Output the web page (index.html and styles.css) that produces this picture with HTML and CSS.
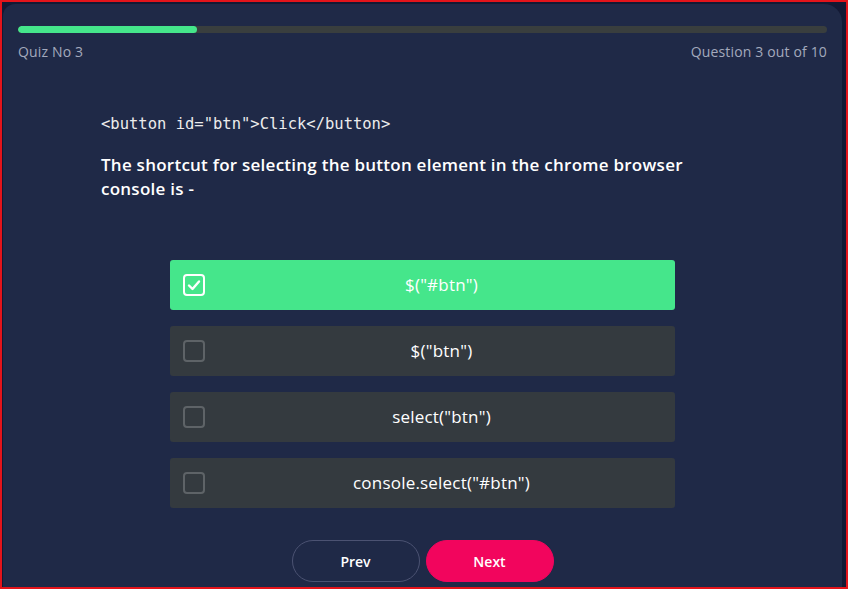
FILE: index.html
```html
<!DOCTYPE html>
<html>
<head>
<meta charset="utf-8">
<link rel="stylesheet" href="styles.css">
</head>
<body>
<div class="frame">
  <div class="card">
    <div class="progress"><div class="progress-fill"></div></div>
    <div class="meta">
      <span>Quiz No 3</span>
      <span>Question 3 out of 10</span>
    </div>
    <div class="question">
      <div class="code">&lt;button id="btn"&gt;Click&lt;/button&gt;</div>
      <p class="prompt">The shortcut for selecting the button element in the chrome browser console is -</p>
    </div>
    <div class="options">
      <div class="option selected">
        <span class="check"><svg viewBox="0 0 22 22" width="22" height="22"><path d="M6 11.5 L9.5 15 L16 7.5" fill="none" stroke="#fff" stroke-width="2.4" stroke-linecap="round" stroke-linejoin="round"/></svg></span>
        <span class="label">$("#btn")</span>
      </div>
      <div class="option">
        <span class="check"></span>
        <span class="label">$("btn")</span>
      </div>
      <div class="option">
        <span class="check"></span>
        <span class="label">select("btn")</span>
      </div>
      <div class="option">
        <span class="check"></span>
        <span class="label">console.select("#btn")</span>
      </div>
    </div>
    <div class="nav">
      <button class="btn btn-prev">Prev</button>
      <button class="btn btn-next">Next</button>
    </div>
  </div>
</div>
</body>
</html>
```

FILE: styles.css
```css
* { box-sizing: border-box; }
html, body { margin: 0; padding: 0; }
body {
  font-family: "Open Sans", "Noto Sans", sans-serif;
  background: #141a36;
}
.frame {
  width: 848px;
  height: 589px;
  border: 2px solid #e3141b;
  background: #131934;
  padding: 2px 4px 0 1px;
  overflow: hidden;
}
.card {
  background: #1f2947;
  border-radius: 12px 18px 0 0;
  height: 100%;
  padding: 22px 15px 0 15px;
}
.progress {
  height: 7px;
  background: #393e3e;
  border-radius: 4px;
  overflow: hidden;
}
.progress-fill {
  width: 179px;
  height: 100%;
  background: #45e68b;
  border-radius: 4px;
}
.meta {
  display: flex;
  justify-content: space-between;
  margin-top: 9px;
  font-size: 14px;
  line-height: 20px;
  color: #a3a9bd;
  letter-spacing: 0.15px;
}
.question {
  margin-left: 83px;
  width: 610px;
  margin-top: 52px;
}
.code {
  font-family: "DejaVu Sans Mono", "Liberation Mono", monospace;
  font-size: 15.5px;
  line-height: 20px;
  color: #ececec;
}
.prompt {
  margin: 19px 0 0 0;
  font-size: 17px;
  font-weight: 600;
  line-height: 24px;
  color: #ffffff;
  letter-spacing: 0.25px;
}
.options {
  width: 505px;
  margin: 59px auto 0 auto;
  display: flex;
  flex-direction: column;
  gap: 16px;
}
.option {
  height: 50px;
  background: #343a3f;
  border-radius: 3px;
  display: flex;
  align-items: center;
  padding-left: 13px;
}
.option.selected { background: #45e68b; }
.check {
  width: 22px;
  height: 22px;
  border: 2px solid #5e6367;
  border-radius: 4px;
  flex: none;
  display: flex;
  align-items: center;
  justify-content: center;
}
.check svg { display: block; flex: none; margin: -2px; }
.selected .check { border-color: #ffffff; }
.label {
  flex: 1;
  margin-left: 3px;
  margin-top: -2px;
  text-align: center;
  color: #ffffff;
  font-size: 17px;
  letter-spacing: 0.2px;
}
.nav {
  margin-top: 32px;
  display: flex;
  justify-content: center;
  gap: 6px;
}
.btn {
  width: 128px;
  height: 42px;
  border-radius: 21px;
  font-family: inherit;
  font-size: 14px;
  font-weight: 600;
  color: #ffffff;
  cursor: pointer;
}
.btn-prev {
  background: transparent;
  border: 1px solid #4b5272;
}
.btn-next {
  background: #f2055d;
  border: 1px solid #f2055d;
}
```
